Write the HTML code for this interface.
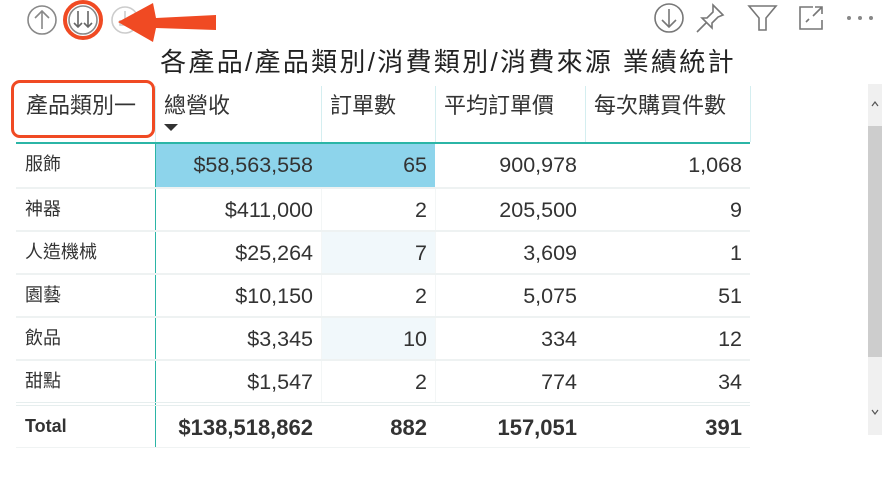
<!DOCTYPE html>
<html><head><meta charset="utf-8"><style>
body{margin:0;width:888px;height:480px;background:#fff;overflow:hidden;position:relative;font-family:"Liberation Sans","Noto Sans CJK TC",sans-serif;color:#333}
.a{position:absolute}
.title{left:120px;top:42px;width:656px;text-align:center;font-size:26px;color:#222;white-space:nowrap;letter-spacing:2.3px}
.h{top:86px;height:56px;font-size:22px;line-height:40px;color:#333;padding-left:8px;box-sizing:border-box;border-left:1px solid #d4eef0}
.c{height:43px;line-height:43px;font-size:21.5px;text-align:right;padding-right:8px;box-sizing:border-box;color:#333}
.l{text-align:left;padding-left:9px;font-size:18px;line-height:40px}
.tot{font-weight:bold}
</style></head><body>
<svg class="a" style="left:0;top:0" width="260" height="44">
<circle cx="42" cy="20" r="14" fill="none" stroke="#888" stroke-width="1.6"/>
<path d="M42 29V11M35 18l7-7 7 7" fill="none" stroke="#888" stroke-width="1.6"/>
<circle cx="83" cy="20" r="14" fill="none" stroke="#888" stroke-width="1.6"/>
<path d="M78 11v16M74 23l4 4 4-4M88 11v16M84 23l4 4 4-4" fill="none" stroke="#666" stroke-width="1.6"/>
<circle cx="83" cy="20" r="18" fill="none" stroke="#f04a23" stroke-width="4"/>
<circle cx="125" cy="20" r="13" fill="none" stroke="#ccc" stroke-width="1.6"/>
<path d="M125 11v9M120 20v5h10v-5" fill="none" stroke="#ccc" stroke-width="1.6"/>
<path d="M216 15L156 18 153 3 118 22 153 42 156 28 216 30Z" fill="#f04a23"/>
</svg>
<svg class="a" style="left:650;top:0" width="238" height="40">
<circle cx="19" cy="18" r="14" fill="none" stroke="#777" stroke-width="1.6"/>
<path d="M19 9v18M12 20l7 7 7-7" fill="none" stroke="#777" stroke-width="1.6"/>
<path d="M63 5l10 10-5 2-6 6 0 5-10-10 5 0 6-6zM56 23l-9 9" fill="none" stroke="#777" stroke-width="1.6"/>
<path d="M99 6h27l-10 12v12h-7V18z" fill="none" stroke="#777" stroke-width="1.6"/>
<path d="M163 7h-13v22h22v-9M156 22l3-3M165 7h7v7M172 7l-9 9" fill="none" stroke="#777" stroke-width="1.6"/>
<circle cx="199" cy="18" r="2" fill="#888"/><circle cx="210" cy="18" r="2" fill="#888"/><circle cx="221" cy="18" r="2" fill="#888"/>
</svg>
<div class="a title">各產品/產品類別/消費類別/消費來源 業績統計</div>
<div class="a h" style="left:16px;width:139px;border-left:none;padding-left:10px">產品類別一</div>
<div class="a h" style="left:155px;width:166px">總營收</div>
<div class="a" style="left:164px;top:124px;width:0;height:0;border-left:7px solid transparent;border-right:7px solid transparent;border-top:7px solid #333"></div>
<div class="a h" style="left:321px;width:114px">訂單數</div>
<div class="a h" style="left:435px;width:150px">平均訂單價</div>
<div class="a h" style="left:585px;width:166px;border-right:1px solid #d4eef0">每次購買件數</div>
<div class="a" style="left:16px;top:142px;width:734px;height:2px;background:#2bb5a6"></div>
<div class="a" style="left:11px;top:80px;width:144px;height:58px;border:3px solid #f04a23;border-radius:9px;box-sizing:border-box"></div>
<div class="a" style="left:155px;top:144px;width:280px;height:43px;background:#8dd4eb"></div>
<div class="a" style="left:321px;top:232px;width:114px;height:41px;background:#f1f8fb"></div>
<div class="a" style="left:321px;top:318px;width:114px;height:41px;background:#f1f8fb"></div>
<div class="a" style="left:321px;top:187px;width:1px;height:216px;background:#f3f6f6"></div>
<div class="a" style="left:435px;top:187px;width:1px;height:216px;background:#f3f6f6"></div>
<div class="a" style="left:155px;top:144px;width:1px;height:304px;background:#2bb5a6"></div>
<div class="a" style="left:16px;top:144px;width:734px">
 <div style="position:relative;height:43px"><div class="a c l" style="left:0;width:139px">服飾</div><div class="a c" style="left:139px;width:166px">$58,563,558</div><div class="a c" style="left:305px;width:114px">65</div><div class="a c" style="left:419px;width:150px">900,978</div><div class="a c" style="left:569px;width:165px">1,068</div></div>
 <div style="position:relative;height:43px;border-top:2px solid #eef2f2;box-sizing:border-box"><div class="a c l" style="left:0;width:139px">神器</div><div class="a c" style="left:139px;width:166px">$411,000</div><div class="a c" style="left:305px;width:114px">2</div><div class="a c" style="left:419px;width:150px">205,500</div><div class="a c" style="left:569px;width:165px">9</div></div>
 <div style="position:relative;height:43px;border-top:2px solid #eef2f2;box-sizing:border-box"><div class="a c l" style="left:0;width:139px">人造機械</div><div class="a c" style="left:139px;width:166px">$25,264</div><div class="a c" style="left:305px;width:114px">7</div><div class="a c" style="left:419px;width:150px">3,609</div><div class="a c" style="left:569px;width:165px">1</div></div>
 <div style="position:relative;height:43px;border-top:2px solid #eef2f2;box-sizing:border-box"><div class="a c l" style="left:0;width:139px">園藝</div><div class="a c" style="left:139px;width:166px">$10,150</div><div class="a c" style="left:305px;width:114px">2</div><div class="a c" style="left:419px;width:150px">5,075</div><div class="a c" style="left:569px;width:165px">51</div></div>
 <div style="position:relative;height:43px;border-top:2px solid #eef2f2;box-sizing:border-box"><div class="a c l" style="left:0;width:139px">飲品</div><div class="a c" style="left:139px;width:166px">$3,345</div><div class="a c" style="left:305px;width:114px">10</div><div class="a c" style="left:419px;width:150px">334</div><div class="a c" style="left:569px;width:165px">12</div></div>
 <div style="position:relative;height:43px;border-top:2px solid #eef2f2;box-sizing:border-box"><div class="a c l" style="left:0;width:139px">甜點</div><div class="a c" style="left:139px;width:166px">$1,547</div><div class="a c" style="left:305px;width:114px">2</div><div class="a c" style="left:419px;width:150px">774</div><div class="a c" style="left:569px;width:165px">34</div></div>
 <div style="position:relative;height:46px;border-top:4px double #e6eeee;box-sizing:border-box" class="tot"><div class="a c l" style="left:0;width:139px">Total</div><div class="a c" style="left:139px;width:166px;font-size:22px">$138,518,862</div><div class="a c" style="left:305px;width:114px;font-size:22px">882</div><div class="a c" style="left:419px;width:150px;font-size:22px">157,051</div><div class="a c" style="left:569px;width:165px;font-size:22px">391</div></div>
</div>
<div class="a" style="left:16px;top:447px;width:734px;height:1px;background:#f0f3f3"></div>
<div class="a" style="left:868px;top:84px;width:14px;height:351px;background:#f0f0f0"></div>
<div class="a" style="left:868px;top:126px;width:14px;height:231px;background:#cdcdcd"></div>
<svg class="a" style="left:868px;top:96px" width="14" height="330"><path d="M4 10l3-4 3 4" fill="none" stroke="#555" stroke-width="1.2"/><path d="M4 314l3 4 3-4" fill="none" stroke="#555" stroke-width="1.2"/></svg>
</body></html>
